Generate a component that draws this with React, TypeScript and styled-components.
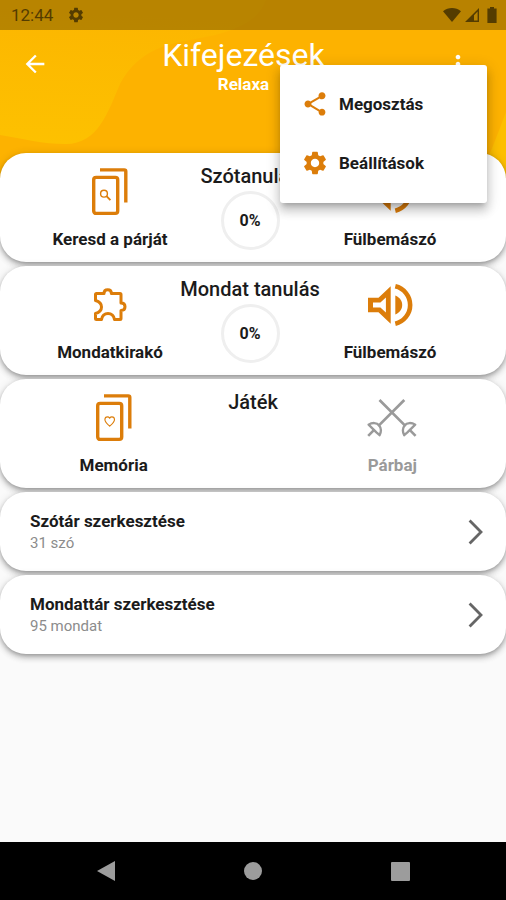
import React, { useState } from "react";
import styled, { createGlobalStyle } from "styled-components";
import { MdArrowBack, MdMoreVert, MdSettings, MdShare } from "react-icons/md";

const GlobalStyle = createGlobalStyle`
  * {
    box-sizing: border-box;
  }

  body {
    margin: 0;
    background: #fafafa;
    color: #1b1b1b;
    font-family: Roboto, sans-serif;
  }

  button {
    padding: 0;
    border: none;
    background: none;
    color: inherit;
    font: inherit;
    cursor: pointer;
  }

  svg {
    display: block;
  }
`;

const Screen = styled.div`
  display: flex;
  flex-direction: column;
  min-height: 100vh;
`;

const Header = styled.header`
  position: relative;
  height: 178px;
  background: #fdb200;
`;

const Waves = styled.svg`
  position: absolute;
  top: 0;
  left: 0;
  width: 100%;
  height: 100%;
`;

const StatusBar = styled.div`
  position: relative;
  display: flex;
  align-items: center;
  height: 30px;
  padding: 0 5px 0 11px;
  background: rgba(0, 0, 0, 0.27);
  color: #543c00;
  font-size: 17px;
`;

const StatusIcons = styled.div`
  display: flex;
  align-items: center;
  gap: 4px;
  margin-left: auto;
`;

const Clock = styled.span`
  margin-right: 14px;
`;

const AppBar = styled.div`
  position: relative;
  display: grid;
  grid-template-columns: 70px 1fr 96px;
  color: white;
`;

const BarButton = styled.button`
  display: flex;
  justify-content: center;
  align-items: center;
  height: 68px;
`;

const Heading = styled.div`
  padding: 6px 0 0 7px;
  text-align: center;
`;

const Title = styled.h1`
  margin: 0;
  font-size: 32px;
  line-height: 38px;
  font-weight: 400;
`;

const Subtitle = styled.p`
  margin: 0;
  font-size: 17px;
  line-height: 20px;
  font-weight: 700;
`;

const Menu = styled.div`
  position: absolute;
  top: 65px;
  right: 19px;
  z-index: 2;
  width: 207px;
  padding: 9px 0 11px;
  border-radius: 3px;
  background: white;
  color: #1b1b1b;
  box-shadow: 0 5px 5px -3px rgba(0, 0, 0, 0.2),
    0 8px 10px 1px rgba(0, 0, 0, 0.14), 0 3px 14px 2px rgba(0, 0, 0, 0.12);
`;

const MenuItem = styled.button`
  display: flex;
  align-items: center;
  gap: 10px;
  width: 100%;
  height: 59px;
  padding: 0 21px;
  font-size: 17px;
  font-weight: 700;

  svg {
    color: #dc7d0a;
  }
`;

const Content = styled.main`
  position: relative;
  z-index: 1;
  display: flex;
  flex: 1;
  flex-direction: column;
  gap: 4px;
  margin-top: -25px;
`;

const Card = styled.section`
  border-radius: 26px;
  background: white;
  box-shadow: 0 2px 4px -1px rgba(0, 0, 0, 0.25),
    0 4px 6px rgba(0, 0, 0, 0.18), 0 1px 10px rgba(0, 0, 0, 0.12);
`;

const LessonCard = styled(Card)<{ $wide?: boolean }>`
  display: grid;
  grid-template-columns: repeat(3, minmax(0, 1fr));
  height: 109px;
  padding: ${(props) => (props.$wide ? "0 44px" : "0 46px 0 40px")};
`;

const Tile = styled.button`
  display: flex;
  flex-direction: column;
  align-items: center;
  gap: 13px;
  padding-top: 15px;
  color: #dc7d0a;

  &:disabled {
    color: #9a9a9a;
    cursor: default;
  }
`;

const IconBox = styled.span`
  display: flex;
  align-items: center;
  height: 48px;
`;

const TileLabel = styled.span`
  color: #1b1b1b;
  font-size: 17px;
  line-height: 20px;
  font-weight: 700;
  white-space: nowrap;

  ${Tile}:disabled & {
    color: #9a9a9a;
  }
`;

const Middle = styled.div`
  display: flex;
  flex-direction: column;
  align-items: center;
  gap: 3px;
  padding-top: 11px;
`;

const CardTitle = styled.h2`
  margin: 0;
  font-size: 20px;
  line-height: 24px;
  font-weight: 500;
  white-space: nowrap;
`;

const Progress = styled.div`
  display: flex;
  justify-content: center;
  align-items: center;
  width: 59px;
  height: 59px;
  border: 3px solid #efefef;
  border-radius: 50%;
  font-size: 16px;
  font-weight: 700;
`;

const EditCard = styled(Card)`
  height: 79px;
`;

const EditButton = styled.button`
  display: flex;
  justify-content: space-between;
  align-items: center;
  width: 100%;
  height: 100%;
  padding: 0 23px 0 30px;
  text-align: left;
`;

const EditText = styled.span`
  display: flex;
  flex-direction: column;
  gap: 2px;
`;

const EditTitle = styled.span`
  font-size: 17px;
  line-height: 20px;
  font-weight: 700;
`;

const EditCount = styled.span`
  color: #8c8c8c;
  font-size: 15px;
  line-height: 20px;
`;

const NavBar = styled.nav`
  display: grid;
  grid-template-columns: repeat(3, 1fr);
  height: 58px;
  padding: 0 32px;
  background: black;
  color: #9c9c9c;
`;

const NavButton = styled.button`
  display: flex;
  justify-content: center;
  align-items: center;
`;

const FindIcon = () => (
  <svg width="36" height="48" fill="none" stroke="currentColor">
    <rect x="1.7" y="9.4" width="24" height="36" rx="2.4" strokeWidth="3.4" />
    <path d="M8 1.9H32.2Q33.8 1.9 33.8 3.5V34.6" strokeWidth="3.4" />
    <circle cx="12" cy="25.7" r="3.4" strokeWidth="1.4" />
    <path d="M14.5 28.2L18.4 32.2" strokeWidth="1.9" />
  </svg>
);

const MemoryIcon = () => (
  <svg width="36" height="48" fill="none" stroke="currentColor">
    <rect x="1.7" y="9.4" width="24" height="36" rx="2.4" strokeWidth="3.4" />
    <path d="M8 1.9H32.2Q33.8 1.9 33.8 3.5V34.6" strokeWidth="3.4" />
    <path
      d="M13.7 32.2C10.6 29.4 8.9 27.8 8.9 25.7C8.9 24.1 10.1 22.9 11.5 22.9C12.4 22.9 13.2 23.4 13.7 24.1C14.2 23.4 15 22.9 15.9 22.9C17.3 22.9 18.5 24.1 18.5 25.7C18.5 27.8 16.8 29.4 13.7 32.2Z"
      strokeWidth="1.1"
    />
  </svg>
);

const PuzzleIcon = () => (
  <svg width="36" height="36" fill="none" stroke="currentColor">
    <path
      d="M3.5 13.5V7.5Q3.5 6.5 4.5 6.5H12C12 4 13.5 2.7 15.7 2.7S19.4 4 19.4 6.5H28Q29 6.5 29 7.5V16C31.6 16 33 17.5 33 19.7S31.6 23.4 29 23.4V31.5Q29 32.5 28 32.5H22.5C22 29 19.5 26.5 16 26.5S10 29 9.5 32.5H4.5Q3.5 32.5 3.5 31.5V26.5C7 25.5 9.5 23 9.5 20S7 14.5 3.5 13.5Z"
      strokeWidth="3"
      strokeLinejoin="round"
    />
  </svg>
);

const SpeakerIcon = () => (
  <svg width="45" height="42" fill="currentColor">
    <path
      fillRule="evenodd"
      d="M0 13.7H10.5L22.7 2.3V39.7L10.5 28.3H0ZM5 18.5V23.6H12.4L17.9 28.6V13.4L12.4 18.5Z"
    />
    <path d="M27.3 11.5C31.8 13.4 34.2 17 34.2 21S31.8 28.6 27.3 30.5Z" />
    <path
      d="M27.3 2.3A19.2 19.2 0 0 1 27.3 39.7"
      fill="none"
      stroke="currentColor"
      strokeWidth="4.6"
    />
  </svg>
);

const SwordsIcon = () => (
  <svg width="50" height="38" fill="none" stroke="currentColor">
    <path d="M12.5 1L38.6 27.1M37.3 1L11.2 27.1" strokeWidth="2.7" />
    <path
      d="M1.2 36.8L7.6 30.4M48.6 36.8L42.2 30.4"
      strokeWidth="2.6"
    />
    <path
      d="M1.6 25.6C5 23.4 10 23.4 12 26.2C14.4 29 14.2 33 12.6 36.2L9.4 33.4L4.6 28.6ZM48.2 25.6C44.8 23.4 39.8 23.4 37.8 26.2C35.4 29 35.6 33 37.2 36.2L40.4 33.4L45.2 28.6Z"
      strokeWidth="2.3"
      strokeLinejoin="round"
    />
  </svg>
);

const ChevronIcon = () => (
  <svg width="15" height="26" fill="none" stroke="#666666" strokeWidth="2.8">
    <path d="M1.6 1.4L13 13L1.6 24.6" />
  </svg>
);

interface EditRowProps {
  title: string;
  count: string;
}

const EditRow: React.FC<EditRowProps> = ({ title, count }) => (
  <EditCard>
    <EditButton type="button">
      <EditText>
        <EditTitle>{title}</EditTitle>
        <EditCount>{count}</EditCount>
      </EditText>
      <ChevronIcon />
    </EditButton>
  </EditCard>
);

interface TileItemProps {
  label: string;
  icon: React.ReactNode;
  disabled?: boolean;
}

const TileItem: React.FC<TileItemProps> = ({ label, icon, disabled }) => (
  <Tile type="button" disabled={disabled}>
    <IconBox>{icon}</IconBox>
    <TileLabel>{label}</TileLabel>
  </Tile>
);

const App: React.FC = () => {
  const [menuOpen, setMenuOpen] = useState(true);

  return (
    <Screen>
      <GlobalStyle />
      <Header>
        <Waves viewBox="0 0 506 178" preserveAspectRatio="none">
          <defs>
            <linearGradient id="wave" x1="0.3" y1="0" x2="0.2" y2="1">
              <stop offset="0" stopColor="#fcb500" />
              <stop offset="1" stopColor="#fdc100" />
            </linearGradient>
          </defs>
          <path
            d="M0 0H266C258 24 228 34 190 40C150 46 132 62 120 84C108 112 98 144 66 144C42 144 24 139 0 135Z"
            fill="url(#wave)"
          />
          <path d="M506 112C500 128 494 144 480 178H506Z" fill="#fdbf00" />
        </Waves>
        <StatusBar>
          <Clock>12:44</Clock>
          <MdSettings size={18} />
          <StatusIcons>
            <svg width="18" height="14" fill="currentColor">
              <path d="M0 3.2C5.4-1 12.6-1 18 3.2L9 14Z" />
            </svg>
            <svg width="14" height="14" fill="currentColor">
              <path fillRule="evenodd" d="M14 0V14H0ZM12.6 3.5L9 7.2V12.6H12.6Z" />
            </svg>
            <svg width="18" height="16" fill="currentColor">
              <path d="M7 0H11V1.6H13.6V16H4.4V1.6H7Z" />
            </svg>
          </StatusIcons>
        </StatusBar>
        <AppBar>
          <BarButton type="button" aria-label="Vissza">
            <MdArrowBack size={28} />
          </BarButton>
          <Heading>
            <Title>Kifejezések</Title>
            <Subtitle>Relaxa</Subtitle>
          </Heading>
          <BarButton
            type="button"
            aria-label="Menü"
            aria-expanded={menuOpen}
            onClick={() => setMenuOpen(!menuOpen)}
          >
            <MdMoreVert size={28} />
          </BarButton>
        </AppBar>
      </Header>
      {menuOpen && (
        <Menu role="menu">
          <MenuItem type="button" role="menuitem">
            <MdShare size={28} />
            Megosztás
          </MenuItem>
          <MenuItem type="button" role="menuitem">
            <MdSettings size={28} />
            Beállítások
          </MenuItem>
        </Menu>
      )}
      <Content>
        <LessonCard>
          <TileItem label="Keresd a párját" icon={<FindIcon />} />
          <Middle>
            <CardTitle>Szótanulás</CardTitle>
            <Progress>0%</Progress>
          </Middle>
          <TileItem label="Fülbemászó" icon={<SpeakerIcon />} />
        </LessonCard>
        <LessonCard>
          <TileItem label="Mondatkirakó" icon={<PuzzleIcon />} />
          <Middle>
            <CardTitle>Mondat tanulás</CardTitle>
            <Progress>0%</Progress>
          </Middle>
          <TileItem label="Fülbemászó" icon={<SpeakerIcon />} />
        </LessonCard>
        <LessonCard $wide>
          <TileItem label="Memória" icon={<MemoryIcon />} />
          <Middle>
            <CardTitle>Játék</CardTitle>
          </Middle>
          <TileItem label="Párbaj" icon={<SwordsIcon />} disabled />
        </LessonCard>
        <EditRow title="Szótár szerkesztése" count="31 szó" />
        <EditRow title="Mondattár szerkesztése" count="95 mondat" />
      </Content>
      <NavBar>
        <NavButton type="button" aria-label="Vissza">
          <svg width="18" height="20" fill="currentColor">
            <path d="M18 0V20L0 10Z" />
          </svg>
        </NavButton>
        <NavButton type="button" aria-label="Kezdőlap">
          <svg width="18" height="18" fill="currentColor">
            <circle cx="9" cy="9" r="9" />
          </svg>
        </NavButton>
        <NavButton type="button" aria-label="Áttekintés">
          <svg width="19" height="19" fill="currentColor">
            <rect width="19" height="19" rx="1" />
          </svg>
        </NavButton>
      </NavBar>
    </Screen>
  );
};

export default App;
